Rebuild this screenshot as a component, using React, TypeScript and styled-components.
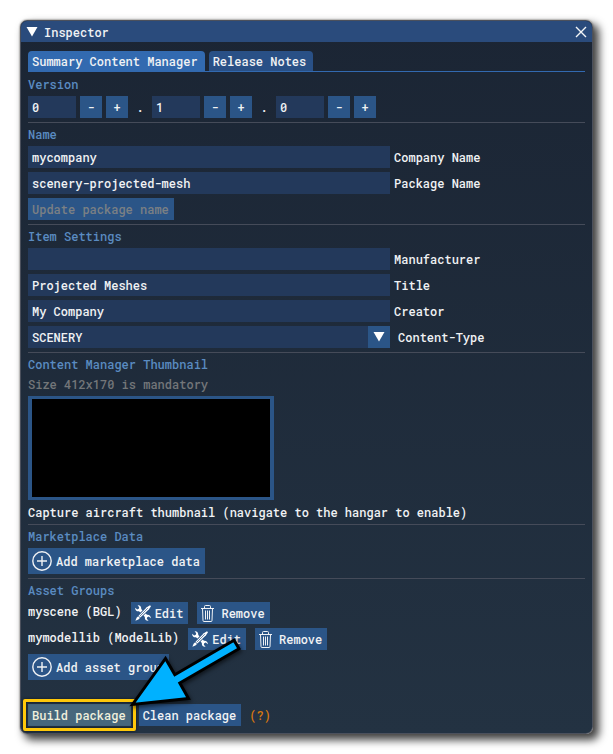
import React from "react";
import styled, { createGlobalStyle } from "styled-components";

const GlobalStyle = createGlobalStyle`
  *, *::before, *::after { box-sizing: border-box; }
  body {
    margin: 0;
    background: #ffffff;
  }
  body, button, input, select {
    font-family: "Roboto Mono", "DejaVu Sans Mono", monospace;
    font-size: 12px;
    font-weight: 500;
    line-height: 16px;
  }
`;

const Page = styled.div`
  padding: 20px;
`;

const Window = styled.main`
  color: #f0f2f4;
  border: 1px solid #4b505c;
  border-radius: 7px;
  background: linear-gradient(#1b2534, #233242);
  box-shadow: 0 0 2px #55504a, 5px 5px 9px 1px rgba(0, 0, 0, 0.75);
`;

const TitleBar = styled.header`
  display: flex;
  align-items: center;
  gap: 6px;
  height: 21px;
  padding: 0 5px;
  border-radius: 6px 6px 0 0;
  background: #2a4b7c;
`;

const Title = styled.h1`
  flex: 1;
  margin: 0;
  font-size: 12px;
  font-weight: 500;
`;

const IconButton = styled.button`
  display: flex;
  padding: 0;
  border: 0;
  color: #f4f6f8;
  background: none;
`;

const Content = styled.div`
  display: flex;
  flex-direction: column;
  gap: 4px;
  padding: 9px 7px 7px;
`;

const Tabs = styled.div`
  display: flex;
  gap: 4px;
  margin-bottom: 1px;
  border-bottom: 1px solid #3269b0;
`;

const Tab = styled.button<{ $active?: boolean }>`
  height: 20px;
  padding: 2px 7px 2px 4px;
  border: 0;
  border-radius: 4px 4px 0 0;
  color: inherit;
  background: ${(p) => (p.$active ? "#326ab0" : "#295086")};
`;

const Section = styled.section`
  display: flex;
  flex-direction: column;
  align-items: flex-start;
  gap: 4px;

  & + & {
    padding-top: 4px;
    border-top: 1px solid #454b59;
  }
`;

const Heading = styled.h2`
  margin: 0;
  font-size: 12px;
  font-weight: 500;
  line-height: 15px;
  color: #5a8bc1;
`;

const Text = styled.p<{ $muted?: boolean }>`
  margin: 0;
  color: ${(p) => (p.$muted ? "#737679" : "inherit")};
`;

const Row = styled.div`
  display: flex;
  align-items: center;
  gap: 4px;
`;

const Dot = styled.span`
  width: 16px;
  text-align: center;
`;

const Input = styled.input<{ $short?: boolean }>`
  width: ${(p) => (p.$short ? "48px" : "100%")};
  height: 22px;
  padding: 0 4px;
  border: 0;
  border-radius: 0;
  color: inherit;
  background: #23395b;
`;

const Button = styled.button<{ $tall?: boolean; $highlighted?: boolean }>`
  display: flex;
  align-items: center;
  gap: 4px;
  height: ${(p) => (p.$tall ? 26 : 22)}px;
  padding: 0 5px 0 4px;
  border: 0;
  color: ${(p) => (p.$highlighted ? "#f0f0dc" : "inherit")};
  background: ${(p) => (p.$highlighted ? "#47677c" : "#2b5587")};
  white-space: nowrap;

  &:disabled { color: #7b8084; }
`;

const StepButton = styled(Button)`
  width: 22px;
  padding: 0;
  justify-content: center;
`;

const Field = styled.div`
  display: grid;
  grid-template-columns: 65% 1fr;
  gap: 4px;
  align-items: center;
  width: 100%;
`;

const FieldLabel = styled.label<{ $indent?: boolean }>`
  padding-left: ${(p) => (p.$indent ? 4 : 0)}px;
`;

const SelectBox = styled.div`
  position: relative;
`;

const Select = styled.select`
  display: block;
  width: 100%;
  height: 22px;
  padding: 0 26px 0 4px;
  border: 0;
  border-radius: 0;
  appearance: none;
  color: inherit;
  background: #23395b;
`;

const SelectArrow = styled.span`
  position: absolute;
  top: 0;
  right: 0;
  display: grid;
  place-items: center;
  width: 22px;
  height: 22px;
  background: #2b5587;
  pointer-events: none;
`;

const Thumbnail = styled.div`
  width: 246px;
  height: 104px;
  border: solid #2b5587;
  border-width: 3px 4px;
  background: #000000;
`;

const AssetRow = styled.div`
  display: flex;
  gap: 9px;
`;

const AssetName = styled.span`
  padding-top: 1px;
`;

const Footer = styled.footer`
  display: flex;
  align-items: center;
  gap: 8px;
  margin-top: 20px;
`;

const Callout = styled.div`
  position: relative;

  &::after {
    content: "";
    position: absolute;
    inset: -5px;
    border: 3px solid #ffc80a;
    border-radius: 2px;
    box-shadow: 0 0 3px #101820, inset 0 0 3px #101820;
    pointer-events: none;
  }
`;

const Pointer = styled.svg`
  position: absolute;
  z-index: 1;
  left: 97px;
  top: -72px;
  filter: drop-shadow(1px 2px 2px rgba(0, 0, 0, 0.6));
  pointer-events: none;
`;

const Help = styled.span`
  color: #d9780f;
`;

const TriangleIcon = () => (
  <svg width="12" height="10" viewBox="0 0 12 10" aria-hidden="true">
    <path d="M0.5 0H11.5L6 9.5Z" fill="#ffffff" />
  </svg>
);

const CloseIcon = () => (
  <svg width="12" height="12" viewBox="0 0 12 12" aria-hidden="true">
    <path d="M1 1L11 11M11 1L1 11" stroke="currentColor" strokeWidth="1.4" />
  </svg>
);

const PlusCircleIcon = () => (
  <svg width="20" height="20" viewBox="0 0 20 20" fill="none" stroke="currentColor" strokeWidth="1.4" aria-hidden="true">
    <circle cx="10" cy="10" r="9.2" />
    <path d="M10 5V15M5 10H15" />
  </svg>
);

const ToolsIcon = () => (
  <svg width="16" height="16" viewBox="0 0 16 16" aria-hidden="true">
    <path
      fill="#ffffff"
      d="M2.6 0.2C4.6 -0.2 6.6 1.4 6.2 4L12 9.8C14.2 9.4 16 11 15.8 13.2L13.8 11.6L12.2 12.2L11.8 13.8L13.6 15.8C11.2 16.2 9.4 14.4 9.9 12L4 6.2C1.8 6.6 0 5 0.2 2.8L2.2 4.4L3.8 3.8L4.2 2.2Z"
    />
    <path d="M14.6 1.4L2.4 13.6" stroke="#2b5587" strokeWidth="4.4" />
    <path d="M15 0.2L16 1.2L14 4.2L5.4 12.6L3.6 10.8L11.8 2.2Z" fill="#ffffff" />
    <path d="M3.2 11.2L5 13L3.4 14.6L0.4 15.8L1.6 12.8Z" fill="#ffffff" />
    <path d="M12.8 3.2L5 11" stroke="#2b5587" strokeWidth="0.7" />
  </svg>
);

const TrashIcon = () => (
  <svg width="13" height="17" viewBox="0 0 13 17" fill="none" stroke="currentColor" aria-hidden="true">
    <path d="M0 3.5H13M3.5 3V1.5Q3.5 0.5 4.5 0.5H8.5Q9.5 0.5 9.5 1.5V3M1.5 3.5L2 15.5Q2 16.5 3 16.5H10Q11 16.5 11 15.5L11.5 3.5M4.5 5.5V14.5M6.5 5.5V14.5M8.5 5.5V14.5" />
  </svg>
);

const VersionPart = ({ label, value }: { label: string; value: string }) => (
  <>
    <Input $short aria-label={label} defaultValue={value} />
    <StepButton aria-label={`Decrease ${label}`}>-</StepButton>
    <StepButton aria-label={`Increase ${label}`}>+</StepButton>
  </>
);

const TextField = ({ id, label, value }: { id: string; label: string; value: string }) => (
  <Field>
    <Input id={id} defaultValue={value} />
    <FieldLabel htmlFor={id}>{label}</FieldLabel>
  </Field>
);

const RemoveButton = styled(Button)`
  gap: 7px;
`;

const AssetGroup = ({ name }: { name: string }) => (
  <AssetRow>
    <AssetName>{name}</AssetName>
    <Button><ToolsIcon />Edit</Button>
    <RemoveButton><TrashIcon />Remove</RemoveButton>
  </AssetRow>
);

export default function App() {
  return (
    <Page>
      <GlobalStyle />
      <Window>
        <TitleBar>
          <IconButton aria-label="Collapse"><TriangleIcon /></IconButton>
          <Title>Inspector</Title>
          <IconButton aria-label="Close"><CloseIcon /></IconButton>
        </TitleBar>
        <Content>
          <Tabs role="tablist">
            <Tab role="tab" aria-selected="true" $active>Summary Content Manager</Tab>
            <Tab role="tab" aria-selected="false">Release Notes</Tab>
          </Tabs>
          <Section>
            <Heading>Version</Heading>
            <Row>
              <VersionPart label="major version" value="0" />
              <Dot>.</Dot>
              <VersionPart label="minor version" value="1" />
              <Dot>.</Dot>
              <VersionPart label="patch version" value="0" />
            </Row>
          </Section>
          <Section>
            <Heading>Name</Heading>
            <TextField id="company" label="Company Name" value="mycompany" />
            <TextField id="package" label="Package Name" value="scenery-projected-mesh" />
            <Button disabled>Update package name</Button>
          </Section>
          <Section>
            <Heading>Item Settings</Heading>
            <TextField id="manufacturer" label="Manufacturer" value="" />
            <TextField id="title" label="Title" value="Projected Meshes" />
            <TextField id="creator" label="Creator" value="My Company" />
            <Field>
              <SelectBox>
                <Select id="content-type" defaultValue="SCENERY">
                  <option>SCENERY</option>
                </Select>
                <SelectArrow><TriangleIcon /></SelectArrow>
              </SelectBox>
              <FieldLabel htmlFor="content-type" $indent>Content-Type</FieldLabel>
            </Field>
          </Section>
          <Section>
            <Heading>Content Manager Thumbnail</Heading>
            <Text $muted>Size 412x170 is mandatory</Text>
            <Thumbnail />
            <Text>Capture aircraft thumbnail (navigate to the hangar to enable)</Text>
          </Section>
          <Section>
            <Heading>Marketplace Data</Heading>
            <Button $tall><PlusCircleIcon />Add marketplace data</Button>
          </Section>
          <Section>
            <Heading>Asset Groups</Heading>
            <AssetGroup name="myscene (BGL)" />
            <AssetGroup name="mymodellib (ModelLib)" />
            <Button $tall><PlusCircleIcon />Add asset group</Button>
          </Section>
          <Footer>
            <Callout>
              <Button $highlighted>Build package</Button>
              <Pointer width="122" height="80" viewBox="125 632 122 80" aria-hidden="true">
                <path
                  d="M132.5 704.5L165.5 658.5L174.8 674.8L234 640.2L239 648.8L179.8 683L188.5 698.5Z"
                  fill="#00b1ff"
                  stroke="#000000"
                  strokeWidth="3"
                />
              </Pointer>
            </Callout>
            <Button>Clean package</Button>
            <Help>(?)</Help>
          </Footer>
        </Content>
      </Window>
    </Page>
  );
}
